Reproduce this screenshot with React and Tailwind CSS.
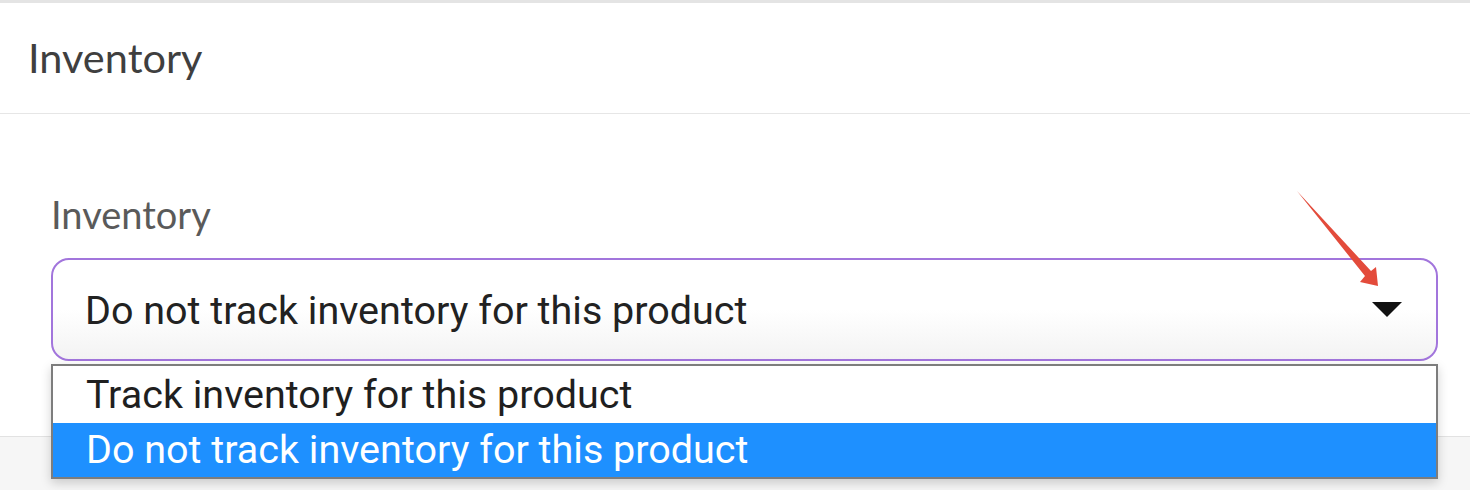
import React from 'react';

const options = [
  'Track inventory for this product',
  'Do not track inventory for this product',
];

function Arrows() {
  // red annotation arrows drawn over the screenshot
  return (
    <svg className="absolute inset-0 pointer-events-none" width="1470" height="490" viewBox="0 0 1470 490">
      <polygon
        points="1297,191 1365,276 1360,282 1378,286 1376,267 1371,271"
        fill="#e34b3b"
      />
      <polygon
        points="763,388.5 657,389.5 657,382 645,392 657,400.5 657,394"
        fill="#e34b3b"
      />
    </svg>
  );
}

export default function App() {
  return (
    <div className="relative w-[1470px] h-[490px] overflow-hidden bg-[#f6f6f6] font-['Lato','Noto_Sans',sans-serif]">
      <div className="bg-white border-t-[3px] border-[#e4e4e4] border-b border-b-[#e2e2e2]">
        {/* Card header */}
        <div className="h-[111px] flex items-center pl-[28px] pb-[3px] border-b border-[#e6e6e6]">
          <h2 className="text-[41.5px] leading-[48px] text-[#3f3f3f]">Inventory</h2>
        </div>

        {/* Card body */}
        <div className="h-[322px] px-[51px] pt-[78px]">
          <label className="block text-[38px] leading-[44px] text-[#5a5a5a]">Inventory</label>
          <div className="relative mt-[22px] w-[1387px]">
            <div className="h-[103px] flex items-center justify-between border-2 border-[#a275dc] rounded-[18px] bg-gradient-to-b from-white via-white to-[#f3f3f3] pl-[32px] pr-[34px]">
              <span className="font-[Roboto,sans-serif] text-[39.5px] leading-[46px] text-[#222] pt-[3px]">Do not track inventory for this product</span>
              <svg width="30" height="15" viewBox="0 0 30 15">
                <polygon points="0,0 30,0 15,15" fill="#111" />
              </svg>
            </div>

            {/* Open select menu */}
            <ul className="absolute left-0 right-0 top-full mt-[3px] z-10 border-2 border-[#7d7d7d] bg-white shadow-[0_4px_10px_rgba(0,0,0,0.18)] font-[Roboto,sans-serif] text-[39.5px] leading-[46px]">
              {options.map((opt, i) => (
                <li
                  key={opt}
                  className={
                    i === 1
                      ? 'h-[54px] flex items-center pl-[33px] bg-[#1e90ff] text-white'
                      : 'h-[57px] flex items-center pl-[33px] text-[#1f1f1f]'
                  }
                >
                  {opt}
                </li>
              ))}
            </ul>
          </div>
        </div>
      </div>
      <Arrows />
    </div>
  );
}
